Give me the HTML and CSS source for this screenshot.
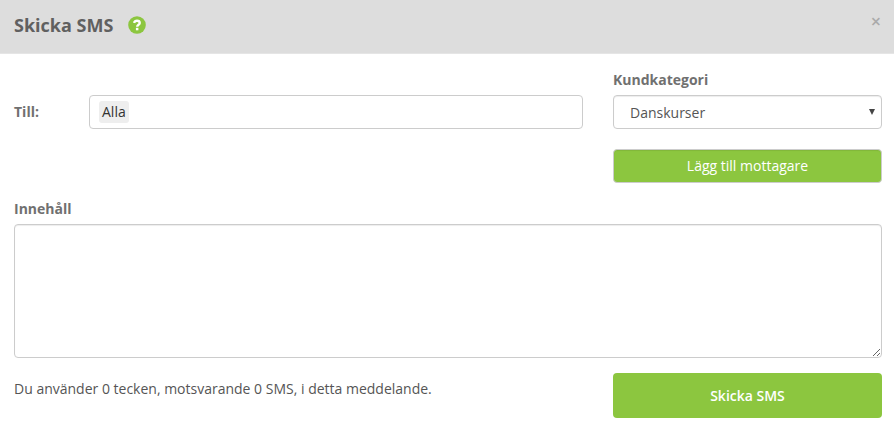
FILE: index.html
```html
<!DOCTYPE html>
<html lang="sv">
<head>
  <meta charset="UTF-8" />
  <meta name="viewport" content="width=device-width, initial-scale=1.0" />
  <title>Skicka SMS</title>
  <link rel="stylesheet" href="styles.css">
</head>
<body>
  <div class="modal-header">
    <h1>Skicka SMS</h1>
    <svg class="help-icon" viewBox="0 0 18 18" aria-label="Hjälp">
      <circle cx="9" cy="9" r="8.8" fill="#8cc63f" />
      <path d="M6 6.900C6.500 5.500 7.500 4.700 9 4.700c1.700 0 2.700 .9 2.700 2.200 0 1.900-2.500 1.800-2.500 3.800" fill="none" stroke="#fff" stroke-width="2.400" />
      <rect x="7.900" y="11.800" width="2.500" height="2.500" fill="#fff" />
    </svg>
    <button class="close" type="button" aria-label="Stäng">×</button>
  </div>

  <form class="modal-body">
    <div class="recipients">
      <span class="label to-label">Till:</span>
      <div class="to-input"><span class="tag">Alla</span></div>
      <div class="category">
        <label class="label" for="category">Kundkategori</label>
        <div class="select-wrap">
          <select id="category">
            <option>Danskurser</option>
          </select>
        </div>
        <button class="btn btn-add" type="button">Lägg till mottagare</button>
      </div>
    </div>

    <label class="label content-label" for="content">Innehåll</label>
    <textarea id="content"></textarea>

    <div class="modal-footer">
      <p>Du använder 0 tecken, motsvarande 0 SMS, i detta meddelande.</p>
      <button class="btn btn-send" type="submit">Skicka SMS</button>
    </div>
  </form>
</body>
</html>
```
FILE: styles.css
```css
* {
  margin: 0; padding: 0; box-sizing: border-box;
}
body {
  font-family: 'Open Sans', sans-serif;
  font-size: 14px;
  line-height: 20px;
  background: #fff;
  color: #555;
}
button, select, textarea {
  font-family: inherit;
  font-size: 14px;
  color: #555;
}

/* Header */
.modal-header {
  display: flex;
  align-items: center;
  height: 54px;
  padding: 0 12px 3px 14px;
  background: #ddd;
  border-bottom: 1px solid #e5e5e5;
}
h1 {
  font-size: 18px;
  font-weight: 700;
  line-height: 26px;
  color: #606060;
}
.help-icon {
  width: 18px;
  height: 18px;
  margin-left: 15px;
}
.close {
  margin-left: auto;
  margin-right: 1px;
  margin-bottom: 9px;
  border: none;
  background: none;
  font-size: 18px;
  font-weight: 600;
  line-height: 20px;
  color: #aaa;
  cursor: pointer;
}

/* Form */
.modal-body {
  padding: 16px 12px 0 14px;
}
.label {
  display: block;
  font-weight: 700;
  color: #707070;
}
.recipients {
  display: grid;
  grid-template-columns: 75px 494px 299px;
}
.to-label {
  margin-top: 32px;
}
.to-input {
  height: 34px;
  margin-top: 25px;
  padding: 5px 9px;
  border: 1px solid #ccc;
  border-radius: 4px;
}
.tag {
  display: inline-block;
  height: 22px;
  padding: 0 3px;
  line-height: 22px;
  color: #333;
  background: #eee;
  border-radius: 3px;
}
.category {
  margin-left: 30px;
}
.select-wrap {
  position: relative;
  margin-top: 5px;
}
.select-wrap::after {
  content: "";
  position: absolute;
  top: 14px;
  right: 7px;
  border: 3px solid transparent;
  border-top: 6px solid #444;
  border-bottom: none;
  pointer-events: none;
}
select {
  display: block;
  width: 100%;
  height: 34px;
  padding: 0 16px;
  border: 1px solid #ccc;
  border-radius: 4px;
  background: #fff;
  box-shadow: inset 0 1px 1px rgba(0,0,0,0.075);
  appearance: none;
}
.btn {
  display: block;
  width: 269px;
  border: none;
  border-radius: 4px;
  background: #8cc63f;
  color: #fff;
  cursor: pointer;
}
.btn-add {
  height: 34px;
  margin-top: 20px;
  padding-bottom: 2px;
  border: 1px solid #ccc;
  box-shadow: inset 0 1px 1px rgba(0,0,0,0.075);
}
.content-label {
  margin-top: 16px;
}
textarea {
  display: block;
  width: 100%;
  height: 134px;
  margin-top: 5px;
  border: 1px solid #ccc;
  border-radius: 4px;
  box-shadow: inset 0 1px 1px rgba(0,0,0,0.075);
}
.modal-footer {
  display: flex;
  justify-content: space-between;
  margin-top: 15px;
}
.modal-footer p {
  margin-top: 6px;
}
.btn-send {
  height: 45px;
  font-weight: 600;
}
```
